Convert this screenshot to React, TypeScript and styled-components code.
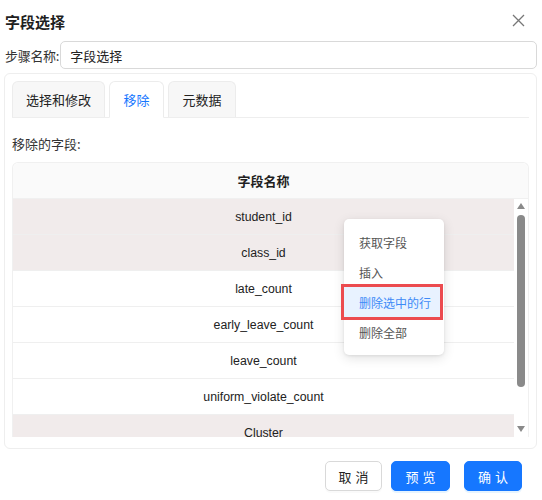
import React from "react";
import styled, { createGlobalStyle } from "styled-components";

const Global = createGlobalStyle`
  html, body { margin: 0; padding: 0; background: #fff; }
  body { font-family: "Noto Sans CJK SC", "Noto Sans", sans-serif; color: #222; }
  * { box-sizing: border-box; }
`;

const Dialog = styled.div`
  width: 542px;
  height: 500px;
  padding: 0 5px 0 4px;
  display: flex;
  flex-direction: column;
  position: relative;
`;

const TitleBar = styled.div`
  height: 41px;
  display: flex;
  align-items: center;
  justify-content: space-between;
  padding: 0 12px 0 1px;
`;

const Title = styled.div`
  font-size: 15px;
  font-weight: 700;
  color: #1f1f1f;
  padding-top: 1px;
`;

const CloseBtn = styled.div`
  width: 14px;
  height: 14px;
  display: flex;
  align-items: center;
  justify-content: center;
`;

const StepRow = styled.div`
  display: flex;
  align-items: center;
  height: 28px;
  gap: 1px;
  margin-left: 1px;
`;

const Label = styled.div`
  font-size: 13px;
  color: #333;
  white-space: nowrap;
  letter-spacing: -0.3px;
`;

const Input = styled.div`
  flex: 1;
  height: 28px;
  border: 1px solid #d9d9d9;
  border-radius: 5px;
  display: flex;
  align-items: center;
  padding-left: 9px;
  font-size: 13px;
  color: #222;
`;

const Panel = styled.div`
  margin-top: 4px;
  height: 376px;
  border: 1px solid #eeeeee;
  border-radius: 6px;
  padding: 8px 7px 0 7px;
  display: flex;
  flex-direction: column;
`;

const TabBar = styled.div`
  display: flex;
  gap: 4px;
  height: 36px;
  border-bottom: 1px solid #eeeeee;
  align-items: flex-end;
`;

const Tab = styled.div<{ $active?: boolean; $w: number }>`
  width: ${(p) => p.$w}px;
  border: 1px solid #ececec;
  border-bottom: ${(p) => (p.$active ? "1px solid #fff" : "none")};
  margin-bottom: ${(p) => (p.$active ? "-1px" : "0")};
  height: ${(p) => (p.$active ? "37px" : "36px")};
  border-radius: 6px 6px 0 0;
  background: ${(p) => (p.$active ? "#fff" : "#f7f7f7")};
  color: ${(p) => (p.$active ? "#1677ff" : "#222")};
  font-size: 13px;
  display: flex;
  align-items: center;
  justify-content: center;
  padding-bottom: ${(p) => (p.$active ? "1px" : "0")};
`;

const SectionLabel = styled.div`
  font-size: 13px;
  color: #333;
  margin-top: 16px;
  height: 20px;
  line-height: 20px;
`;

const Table = styled.div`
  margin-top: 8px;
  border: 1px solid #f0f0f0;
  border-bottom: none;
  border-radius: 6px 6px 0 0;
  display: flex;
  flex-direction: column;
`;

const HeaderRow = styled.div`
  height: 36px;
  background: #fafafa;
  border-bottom: 1px solid #f0f0f0;
  border-radius: 6px 6px 0 0;
  display: flex;
  align-items: center;
  justify-content: center;
  padding-right: 14px;
  font-size: 13px;
  font-weight: 700;
  color: #1f1f1f;
`;

const Body = styled.div`
  height: 238px;
  display: flex;
  overflow: hidden;
`;

const Rows = styled.div`
  flex: 1;
  display: flex;
  flex-direction: column;
`;

const Row = styled.div<{ $selected?: boolean }>`
  flex: 0 0 36px;
  height: 36px;
  background: ${(p) => (p.$selected ? "#f1ebeb" : "#fff")};
  border-bottom: 1px solid #efefef;
  display: flex;
  align-items: center;
  justify-content: center;
  font-family: "Liberation Sans", "Noto Sans CJK SC", sans-serif;
  font-size: 12.3px;
  color: #222;
`;

const ScrollTrack = styled.div`
  width: 14px;
  display: flex;
  flex-direction: column;
  align-items: center;
  background: #fff;
  padding-top: 4px;
`;

const Arrow = styled.div<{ $down?: boolean }>`
  width: 0;
  height: 0;
  border-left: 4px solid transparent;
  border-right: 4px solid transparent;
  ${(p) =>
    p.$down
      ? "border-top: 6px solid #8a8a8a;"
      : "border-bottom: 6px solid #8a8a8a;"}
`;

const Thumb = styled.div`
  width: 8px;
  height: 172px;
  background: #8a8a8a;
  border-radius: 4px;
  margin: 6px 0 39px;
`;

const Footer = styled.div`
  display: flex;
  justify-content: flex-end;
  align-items: center;
  padding: 12px 15px 0 0;
`;

const Button = styled.div<{ $primary?: boolean; $w: number; $ml: number }>`
  width: ${(p) => p.$w}px;
  height: 30px;
  margin-left: ${(p) => p.$ml}px;
  border-radius: 5px;
  border: 1px solid ${(p) => (p.$primary ? "#1677ff" : "#d9d9d9")};
  background: ${(p) => (p.$primary ? "#1677ff" : "#fff")};
  color: ${(p) => (p.$primary ? "#fff" : "#222")};
  font-size: 13px;
  letter-spacing: 4px;
  padding-left: 4px;
  display: flex;
  align-items: center;
  justify-content: center;
  box-shadow: ${(p) => (p.$primary ? "0 2px 0 rgba(5,145,255,0.1)" : "0 2px 0 rgba(0,0,0,0.02)")};
`;

const Menu = styled.div`
  position: absolute;
  left: 344px;
  top: 219px;
  width: 100px;
  padding: 8px 4px 8px 0;
  background: #fff;
  border-radius: 5px;
  box-shadow: 0 3px 12px rgba(0, 0, 0, 0.12), 0 1px 3px rgba(0, 0, 0, 0.08);
  display: flex;
  flex-direction: column;
`;

const MenuItem = styled.div<{ $hl?: boolean }>`
  height: 30px;
  display: flex;
  align-items: center;
  padding-left: 15px;
  font-size: 12px;
  color: ${(p) => (p.$hl ? "#3d8af7" : "#555")};
  background: ${(p) => (p.$hl ? "#e8f2ff" : "transparent")};
  box-shadow: ${(p) => (p.$hl ? "0 0 0 3px #ec4b4f" : "none")};
  white-space: nowrap;
`;

const rows = [
  { name: "student_id", sel: true },
  { name: "class_id", sel: true },
  { name: "late_count" },
  { name: "early_leave_count" },
  { name: "leave_count" },
  { name: "uniform_violate_count" },
  { name: "Cluster", sel: true },
];

export default function App() {
  return (
    <>
      <Global />
      <Dialog>
        <TitleBar>
          <Title>字段选择</Title>
          <CloseBtn>
            <svg width="13" height="13" viewBox="0 0 13 13">
              <path d="M1 1L12 12M12 1L1 12" stroke="#777" strokeWidth="1.3" />
            </svg>
          </CloseBtn>
        </TitleBar>
        <StepRow>
          <Label>步骤名称:</Label>
          <Input>字段选择</Input>
        </StepRow>
        <Panel>
          <TabBar>
            <Tab $w={93}>选择和修改</Tab>
            <Tab $w={55} $active>
              移除
            </Tab>
            <Tab $w={68}>元数据</Tab>
          </TabBar>
          <SectionLabel>移除的字段:</SectionLabel>
          <Table>
            <HeaderRow>字段名称</HeaderRow>
            <Body>
              <Rows>
                {rows.map((r) => (
                  <Row key={r.name} $selected={r.sel}>
                    {r.name}
                  </Row>
                ))}
              </Rows>
              <ScrollTrack>
                <Arrow />
                <Thumb />
                <Arrow $down />
              </ScrollTrack>
            </Body>
          </Table>
        </Panel>
        <Footer>
          <Button $w={57} $ml={0}>取消</Button>
          <Button $w={59} $ml={9} $primary>预览</Button>
          <Button $w={58} $ml={14} $primary>确认</Button>
        </Footer>
        <Menu>
          <MenuItem>获取字段</MenuItem>
          <MenuItem>插入</MenuItem>
          <MenuItem $hl>删除选中的行</MenuItem>
          <MenuItem>删除全部</MenuItem>
        </Menu>
      </Dialog>
    </>
  );
}
